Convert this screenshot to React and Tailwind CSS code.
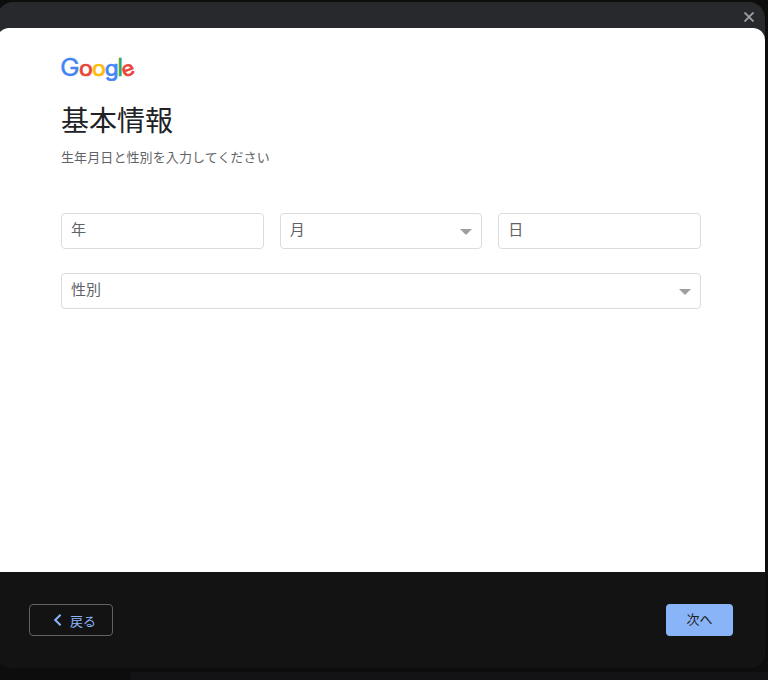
import React from "react";

const GoogleLogo = () => (
    <svg width="74" height="24" viewBox="0 0 74 24" role="img" aria-label="Google"
         className="block overflow-visible font-['Inter',sans-serif]">
        <text x="-1" y="18.6" fontSize="24.4" textLength="19.6" lengthAdjust="spacingAndGlyphs"
              fill="#4285f4" stroke="#4285f4" strokeWidth="0.4">G</text>
        <text x="18" y="19" fontSize="20.8" textLength="13.8" lengthAdjust="spacingAndGlyphs"
              fill="#ea4335" stroke="#ea4335" strokeWidth="0.7">o</text>
        <text x="31" y="19" fontSize="20.8" textLength="13.8" lengthAdjust="spacingAndGlyphs"
              fill="#fbbc05" stroke="#fbbc05" strokeWidth="0.7">o</text>
        <text x="43.8" y="19" fontSize="20.8" textLength="13.9" lengthAdjust="spacingAndGlyphs"
              fill="#4285f4" stroke="#4285f4" strokeWidth="0.7">g</text>
        <text x="56.2" y="18.8" fontSize="23.6" fill="#34a853" stroke="#34a853" strokeWidth="0.6">l</text>
        <text x="60.6" y="18.6" fontSize="20.2" textLength="12.8" lengthAdjust="spacingAndGlyphs"
              fill="#ea4335" stroke="#ea4335" strokeWidth="0.7" transform="rotate(-20 67.2 12.8)">e</text>
    </svg>
);

const DropdownArrow = () => (
    <svg width="12" height="6" viewBox="0 0 12 6" className="mt-0.5 shrink-0">
        <path d="M0 0h12L6 6z" fill="#9e9e9e"/>
    </svg>
);

const Field = ({ label, dropdown }) => (
    <button type="button"
            className="flex h-9 w-full items-center justify-between rounded border border-[#dadce0] pr-[9px] pl-[9px] text-[15px] leading-5 text-[#5f6368]">
        <span className="-mt-1">{label}</span>
        {dropdown && <DropdownArrow/>}
    </button>
);

export default function App() {
    return (
        <div className="h-[680px] w-[768px] overflow-hidden bg-[#0d0d0d] pt-0.5 font-['Noto_Sans_CJK_JP',sans-serif]">
            <div className="-ml-[3px] flex h-[666px] w-[768px] flex-col overflow-hidden rounded-2xl bg-[#28292c]">
                <header className="flex h-[26px] shrink-0 items-center justify-end pt-1 pr-[11px]">
                    <button type="button" aria-label="閉じる">
                        <svg width="10" height="10" viewBox="0 0 10 10" fill="none" stroke="#9aa0a6" strokeWidth="1.9">
                            <path d="M.5.5l9 9M9.5.5l-9 9"/>
                        </svg>
                    </button>
                </header>
                <main className="flex h-[544px] shrink-0 flex-col rounded-t-xl bg-white pt-[29px] pr-16 pl-16">
                    <GoogleLogo/>
                    <h1 className="mt-5 text-[28px] leading-9 text-[#202124]">基本情報</h1>
                    <p className="mt-2.5 text-[13px] leading-5 tracking-[0.1px] text-[#5f6368]">生年月日と性別を入力してください</p>
                    <div className="mt-[46px] grid grid-cols-3 gap-4">
                        <Field label="年"/>
                        <Field label="月" dropdown/>
                        <Field label="日"/>
                    </div>
                    <div className="mt-6">
                        <Field label="性別" dropdown/>
                    </div>
                </main>
                <footer className="flex grow items-center justify-between bg-[#131313] pr-8 pl-8">
                    <button type="button"
                            className="flex h-8 w-[84px] items-center rounded border border-[#5f6368] pl-6 text-[13px] leading-5 text-[#8ab4f8]">
                        <svg width="8" height="12" viewBox="0 0 8 12" fill="none" stroke="#8ab4f8" strokeWidth="2">
                            <path d="M6.6.8L1.2 6l5.4 5.2"/>
                        </svg>
                        <span className="mt-0.5 ml-2">戻る</span>
                    </button>
                    <button type="button"
                            className="h-8 w-[67px] rounded bg-[#8ab4f8] pb-0.5 text-[13px] leading-5 text-[#202124]">
                        次へ
                    </button>
                </footer>
            </div>
            <div className="ml-[131px] mt-1 h-2 bg-[#131315]"/>
        </div>
    );
}
